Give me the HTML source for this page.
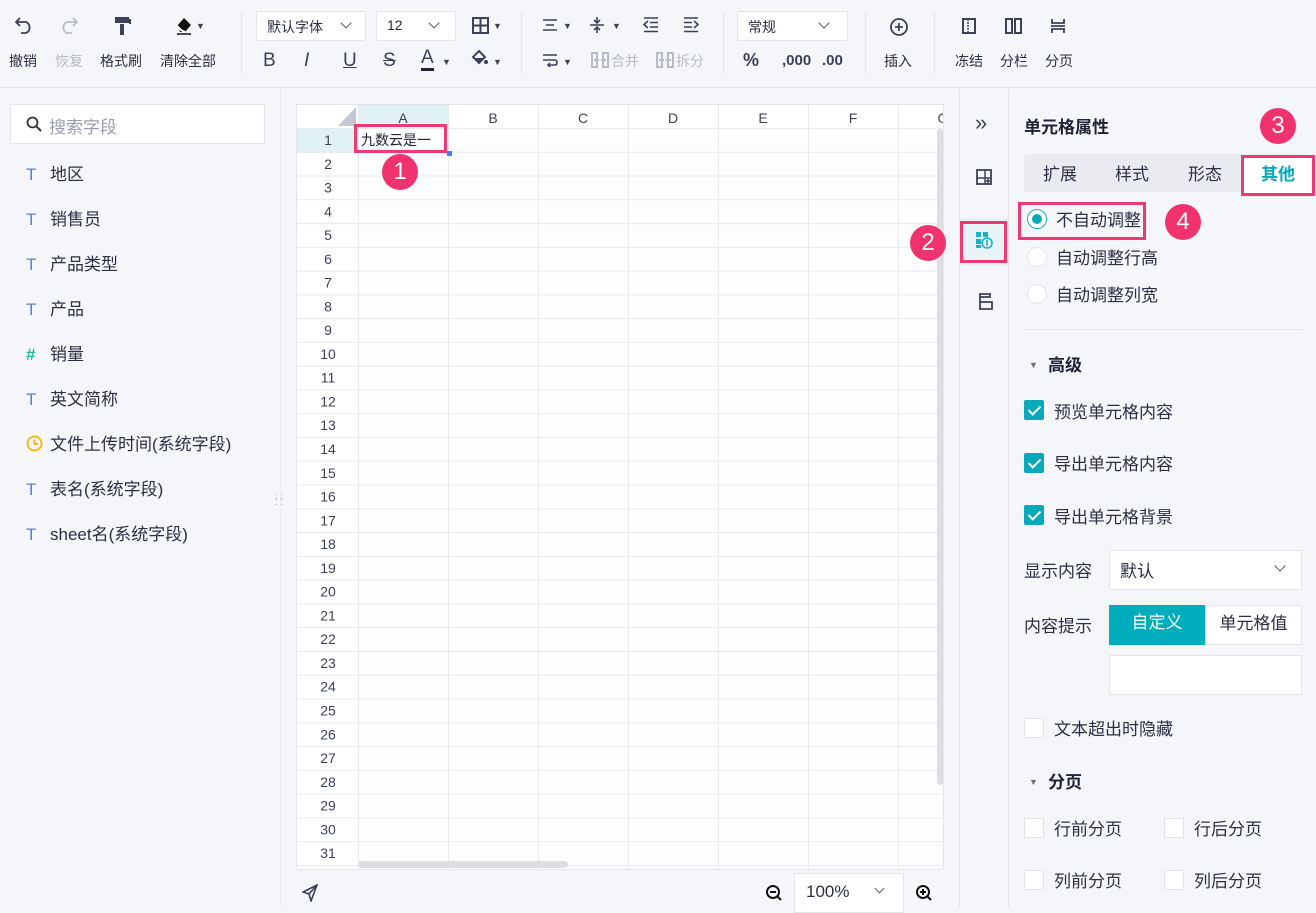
<!DOCTYPE html>
<html><head><meta charset="utf-8"><style>
*{box-sizing:border-box;margin:0;padding:0}
body{width:1316px;height:907px;overflow:hidden;background:#f5f6f9;font-family:"Liberation Sans","Noto Sans CJK SC",sans-serif;color:#2b2f44;position:relative;font-size:14px}
.a{position:absolute}
.tb{left:0;top:0;width:1316px;height:88px;background:#f5f6f9;border-bottom:1px solid #e3e5ea}
.lbl{font-size:14px;color:#2b2f44;white-space:nowrap}
.sep{width:1px;background:#e3e5ea;top:12px;height:62px}
.sel{background:#fff;border:1px solid #e3e5ea;border-radius:2px;height:30px;font-size:14px;padding:5px 10px}
.chev{width:8px;height:8px;border-right:1.5px solid #555a6e;border-bottom:1.5px solid #555a6e;transform:rotate(45deg)}
.ic{font-size:18px;color:#3c4158}
.tri{font-size:9px;color:#3c4158}
.grid{left:296px;top:104px;width:648px;height:766px;background:#fcfdff;border:1px solid #e3e5ea;overflow:hidden}
.fld{left:26px;font-size:17px;color:#2b2f44}
.fld b{display:inline-block;width:24px;color:#5a7fd8;font-weight:normal}
.badge{width:36px;height:36px;border-radius:50%;background:#f0336e;color:#fff;font-size:24px;text-align:center;line-height:36px}
.red{border:3px solid #ee3a72}
.cb{width:20px;height:20px;border-radius:2px;background:#fff;border:1px solid #dfe1e7}
.cb.on{background:#0aa9ba;border-color:#0aa9ba}
.cb.on:after{content:"";position:absolute;left:6px;top:2px;width:5px;height:10px;border-right:2px solid #fff;border-bottom:2px solid #fff;transform:rotate(45deg)}
.rd{width:20px;height:20px;border-radius:50%;background:#fff;border:1px solid #e3e5ea}
.t16{font-size:17px}
</style></head><body>
<div class="a tb"></div>
<svg class="a" style="left:15px;top:16px" width="20" height="18"><path d="M5 2L1 6L5 10M1 6H11A6 6 0 0 1 11 17H6" fill="none" stroke="#3c4158" stroke-width="1.8"/></svg>
<svg class="a" style="left:59px;top:16px" width="20" height="18"><path d="M14 2L18 6L14 10M18 6H8A6 6 0 0 0 8 17H13" fill="none" stroke="#b8bbc6" stroke-width="1.8"/></svg>
<svg class="a" style="left:114px;top:16px" width="18" height="20"><rect x="1" y="1" width="14" height="6" fill="#3c4158"/><rect x="15" y="3" width="2" height="5" fill="#3c4158"/><rect x="6" y="8" width="4" height="11" fill="#3c4158"/></svg>
<svg class="a" style="left:174px;top:15px" width="20" height="20"><path d="M3 11 L10 3 L17 10 L11 17 H6 Z" fill="#111"/><path d="M3 11 L7 15 L11 17" stroke="#fff" stroke-width="2" fill="none"/><line x1="3" y1="19" x2="17" y2="19" stroke="#111" stroke-width="1.5"/></svg>
<div class="a tri" style="left:196px;top:21px">▼</div>
<div class="a lbl" style="left:9px;top:51px">撤销</div>
<div class="a lbl" style="left:55px;top:51px;color:#b8bbc6">恢复</div>
<div class="a lbl" style="left:100px;top:51px">格式刷</div>
<div class="a lbl" style="left:160px;top:51px">清除全部</div>
<div class="a sep" style="left:241px"></div>
<div class="a sel" style="left:256px;top:11px;width:110px">默认字体</div><div class="a chev" style="left:342px;top:19px"></div>
<div class="a sel" style="left:376px;top:11px;width:80px">12</div><div class="a chev" style="left:430px;top:19px"></div>
<svg class="a" style="left:472px;top:17px" width="18" height="18"><rect x="1" y="1" width="15" height="15" fill="none" stroke="#3c4158" stroke-width="2"/><line x1="8.5" y1="1" x2="8.5" y2="16" stroke="#3c4158" stroke-width="2"/><line x1="1" y1="8.5" x2="16" y2="8.5" stroke="#3c4158" stroke-width="2"/></svg><div class="a tri" style="left:493px;top:21px">▼</div>
<div class="a" style="left:263px;top:50px;font-size:19px;color:#3c4158">B</div>
<div class="a" style="left:304px;top:50px;font-size:19px;color:#3c4158;font-style:italic">I</div>
<div class="a" style="left:343px;top:50px;font-size:19px;color:#3c4158;text-decoration:underline">U</div>
<div class="a" style="left:383px;top:50px;font-size:19px;color:#3c4158;text-decoration:line-through">S</div>
<div class="a" style="left:421px;top:48px;font-size:19px;color:#3c4158;border-bottom:3px solid #1e2236;line-height:20px">A</div><div class="a tri" style="left:442px;top:57px">▼</div>
<svg class="a" style="left:471px;top:50px" width="18" height="18"><path d="M8 1L14 7L8 13L2 7Z" fill="none" stroke="#3c4158" stroke-width="2"/><path d="M3 8H13L8 13Z" fill="#3c4158"/><circle cx="15" cy="12" r="2" fill="#3c4158"/></svg><div class="a tri" style="left:493px;top:57px">▼</div>
<div class="a sep" style="left:521px"></div>
<svg class="a" style="left:542px;top:18px" width="16" height="14"><path d="M1 2H15M4 7H12M1 12H15" stroke="#3c4158" stroke-width="1.6"/></svg><div class="a tri" style="left:563px;top:21px">▼</div>
<svg class="a" style="left:589px;top:16px" width="16" height="18"><path d="M1 9H15M8 1V7M8 11V17M5 4L8 7L11 4M5 14L8 11L11 14" stroke="#3c4158" stroke-width="1.6" fill="none"/></svg><div class="a tri" style="left:612px;top:21px">▼</div>
<svg class="a" style="left:643px;top:17px" width="16" height="16"><path d="M1 1H15M7 5.5H15M7 10H15M1 14.5H15M5 4L1 7.5L5 11" stroke="#3c4158" stroke-width="1.6" fill="none"/></svg>
<svg class="a" style="left:683px;top:17px" width="16" height="16"><path d="M1 1H15M1 5.5H9M1 10H9M1 14.5H15M11 4L15 7.5L11 11" stroke="#3c4158" stroke-width="1.6" fill="none"/></svg>
<svg class="a" style="left:542px;top:53px" width="16" height="14"><path d="M1 2H15M1 7H13Q15 7 15 9.5Q15 12 13 12H6M8 10L6 12L8 14" stroke="#3c4158" stroke-width="1.6" fill="none"/></svg><div class="a tri" style="left:563px;top:57px">▼</div>
<svg class="a" style="left:591px;top:52px" width="18" height="16"><path d="M1 1H6V15H1ZM17 1H12V15H17ZM3 8H8M15 8H10" fill="none" stroke="#b8bbc6" stroke-width="2"/></svg><div class="a lbl" style="left:611px;top:51px;color:#b8bbc6">合并</div>
<svg class="a" style="left:656px;top:52px" width="18" height="16"><path d="M1 1H6V15H1ZM17 1H12V15H17ZM3 8H8M15 8H10" fill="none" stroke="#b8bbc6" stroke-width="2"/></svg><div class="a lbl" style="left:676px;top:51px;color:#b8bbc6">拆分</div>
<div class="a sep" style="left:723px"></div>
<div class="a sel" style="left:737px;top:11px;width:111px">常规</div><div class="a chev" style="left:820px;top:19px"></div>
<div class="a" style="left:743px;top:50px;font-size:18px;color:#3c4158;font-weight:bold">%</div>
<div class="a" style="left:782px;top:52px;font-size:15px;color:#3c4158;font-weight:bold">,000</div>
<div class="a" style="left:822px;top:52px;font-size:15px;color:#3c4158;font-weight:bold">.00</div>
<div class="a sep" style="left:865px"></div>
<svg class="a" style="left:889px;top:17px" width="20" height="20"><circle cx="10" cy="10" r="8" fill="none" stroke="#3c4158" stroke-width="1.8"/><path d="M10 6V14M6 10H14" stroke="#3c4158" stroke-width="1.8"/></svg>
<div class="a lbl" style="left:884px;top:51px">插入</div>
<div class="a sep" style="left:934px"></div>
<svg class="a" style="left:962px;top:18px" width="16" height="16"><rect x="1" y="1" width="12" height="14" fill="none" stroke="#3c4158" stroke-width="2"/><line x1="6" y1="1" x2="6" y2="15" stroke="#3c4158" stroke-width="1.5" stroke-dasharray="2 1"/></svg>
<svg class="a" style="left:1005px;top:18px" width="18" height="16"><rect x="1" y="1" width="6" height="14" fill="none" stroke="#3c4158" stroke-width="2"/><rect x="10" y="1" width="6" height="14" fill="none" stroke="#3c4158" stroke-width="2"/></svg>
<svg class="a" style="left:1050px;top:18px" width="16" height="16"><path d="M2 1V5H14V1M1 8H15M2 15V11H14V15" stroke="#3c4158" stroke-width="1.8" fill="none"/></svg>
<div class="a lbl" style="left:955px;top:51px">冻结</div>
<div class="a lbl" style="left:1000px;top:51px">分栏</div>
<div class="a lbl" style="left:1045px;top:51px">分页</div>

<div class="a" style="left:280px;top:89px;width:1px;height:818px;background:#e8eaee"></div>
<div class="a" style="left:10px;top:104px;width:255px;height:40px;background:#fff;border:1px solid #e3e5ea;border-radius:2px"></div>
<svg class="a" style="left:26px;top:116px" width="16" height="16"><circle cx="6.5" cy="6.5" r="5" fill="none" stroke="#333" stroke-width="1.8"/><line x1="10" y1="10" x2="15" y2="15" stroke="#333" stroke-width="2"/></svg>
<div class="a" style="left:49px;top:113px;font-size:17px;color:#9a9eae">搜索字段</div>
<div class="a fld" style="top:160px"><b>T</b>地区</div>
<div class="a fld" style="top:205px"><b>T</b>销售员</div>
<div class="a fld" style="top:250px"><b>T</b>产品类型</div>
<div class="a fld" style="top:295px"><b>T</b>产品</div>
<div class="a fld" style="top:340px"><b style="color:#2bb5a5;font-weight:bold">#</b>销量</div>
<div class="a fld" style="top:385px"><b>T</b>英文简称</div>
<div class="a fld" style="top:430px"><b><svg width="17" height="17" style="vertical-align:-2px"><circle cx="8.5" cy="8.5" r="7" fill="none" stroke="#f5b91c" stroke-width="2"/><path d="M8.5 4.5V9H12" stroke="#f5b91c" stroke-width="2" fill="none"/></svg></b>文件上传时间(系统字段)</div>
<div class="a fld" style="top:475px"><b>T</b>表名(系统字段)</div>
<div class="a fld" style="top:520px"><b>T</b>sheet名(系统字段)</div>
<div class="a" style="left:275px;top:494px;font-size:10px;color:#9a9eae;line-height:6px">: :<br>: :</div>

<div class="a grid">
<svg width="648" height="766" style="position:absolute;left:0;top:0">
<rect x="0" y="0" width="648" height="24" fill="#fff"/>
<rect x="0" y="24" width="61" height="742" fill="#fff"/>
<rect x="61" y="0" width="90" height="24" fill="#e1f2f6"/>
<rect x="0" y="24" width="61" height="24" fill="#e1f2f6"/>
<path d="M59 2L59 21L41 21Z" fill="#c4c7d1"/>
<g stroke="#e8eaee" stroke-width="1">
<line x1="61.5" y1="0" x2="61.5" y2="766"/><line x1="151.5" y1="0" x2="151.5" y2="766"/><line x1="241.5" y1="0" x2="241.5" y2="766"/><line x1="331.5" y1="0" x2="331.5" y2="766"/><line x1="421.5" y1="0" x2="421.5" y2="766"/><line x1="511.5" y1="0" x2="511.5" y2="766"/><line x1="601.5" y1="0" x2="601.5" y2="766"/>
</g>
<g stroke="#e8eaee" id="rows"></g>
<g font-family="Liberation Sans" font-size="14" fill="#3c4158" text-anchor="middle">
<text x="106" y="18">A</text><text x="196" y="18">B</text><text x="286" y="18">C</text><text x="376" y="18">D</text><text x="466" y="18">E</text><text x="556" y="18">F</text><text x="646" y="18">G</text>
</g>
<g id="nums" font-family="Liberation Sans" font-size="14" fill="#3c4158" text-anchor="middle"></g>
<rect x="640" y="24" width="6" height="656" rx="3" fill="#dcdee3"/>
<rect x="61" y="756" width="210" height="7" rx="3.5" fill="#dcdee3"/>
</svg>
</div>
<div class="a red" style="left:354px;top:124px;width:93px;height:29px"></div>
<div class="a" style="left:361px;top:130px;font-size:14px;color:#1e2236">九数云是一</div>
<div class="a" style="left:447px;top:151px;width:5px;height:5px;background:#3b82f6"></div>
<div class="a badge" style="left:382px;top:154px">1</div>

<svg class="a" style="left:302px;top:884px" width="16" height="18"><path d="M15 1L1 8L7 10L9 17Z M7 10L15 1" fill="none" stroke="#3c4158" stroke-width="1.6"/></svg>
<svg class="a" style="left:765px;top:884px" width="18" height="18"><circle cx="8" cy="8" r="6" fill="none" stroke="#111" stroke-width="2"/><path d="M5 8H11M12 12L16 16" stroke="#111" stroke-width="2"/></svg>
<div class="a" style="left:794px;top:873px;width:110px;height:40px;background:#fff;border:1px solid #e3e5ea"></div>
<div class="a" style="left:806px;top:882px;font-size:17px;color:#2b2f44">100%</div>
<div class="a chev" style="left:876px;top:885px;width:7px;height:7px"></div>
<svg class="a" style="left:915px;top:884px" width="18" height="18"><circle cx="8" cy="8" r="6" fill="none" stroke="#111" stroke-width="2"/><path d="M5 8H11M8 5V11M12 12L16 16" stroke="#111" stroke-width="2"/></svg>

<div class="a" style="left:959px;top:89px;width:1px;height:818px;background:#e3e5ea"></div>
<div class="a" style="left:1008px;top:89px;width:1px;height:818px;background:#e3e5ea"></div>
<div class="a" style="left:975px;top:110px;font-size:22px;color:#3c4158">»</div>
<svg class="a" style="left:976px;top:169px" width="16" height="16"><rect x="1" y="1" width="14" height="14" fill="none" stroke="#3c4158" stroke-width="1.8"/><path d="M1 9H15M9 1V15M12 9V15M9 12H15" stroke="#3c4158" stroke-width="1.5"/></svg>
<div class="a" style="left:960px;top:218px;width:48px;height:48px;background:#e9f3f6"></div>
<div class="a red" style="left:960px;top:221px;width:47px;height:42px"></div>
<svg class="a" style="left:975px;top:231px" width="18" height="18"><rect x="1" y="1" width="5" height="5" fill="#19b2c4"/><rect x="8" y="1" width="5" height="5" fill="#19b2c4"/><rect x="1" y="8" width="5" height="5" fill="#19b2c4"/><rect x="1" y="14" width="5" height="3" fill="#19b2c4"/><circle cx="12" cy="12" r="5" fill="none" stroke="#19b2c4" stroke-width="1.6"/><line x1="12" y1="9" x2="12" y2="15" stroke="#19b2c4" stroke-width="1.6"/></svg>
<div class="a badge" style="left:910px;top:225px">2</div>
<svg class="a" style="left:976px;top:293px" width="18" height="18"><path d="M4 4H14V1H4ZM4 4V16H16V9H4" fill="none" stroke="#3c4158" stroke-width="1.8"/></svg>

<div class="a" style="left:1024px;top:113px;font-size:17px;font-weight:bold;color:#1e2236">单元格属性</div>
<div class="a badge" style="left:1260px;top:108px">3</div>
<div class="a" style="left:1024px;top:154px;width:275px;height:38px;background:#eaebf0;border-radius:2px"></div>
<div class="a t16" style="left:1043px;top:160px">扩展</div>
<div class="a t16" style="left:1115px;top:160px">样式</div>
<div class="a t16" style="left:1188px;top:160px">形态</div>
<div class="a" style="left:1241px;top:155px;width:74px;height:41px;background:#fff"></div>
<div class="a red" style="left:1241px;top:155px;width:74px;height:41px"></div>
<div class="a t16" style="left:1261px;top:160px;color:#0aa9ba;font-weight:bold">其他</div>
<div class="a red" style="left:1018px;top:202px;width:128px;height:38px"></div>
<div class="a rd" style="left:1027px;top:209px;border-color:#19b2c4"></div>
<div class="a" style="left:1032px;top:214px;width:10px;height:10px;border-radius:50%;background:#0aa9ba"></div>
<div class="a t16" style="left:1056px;top:206px">不自动调整</div>
<div class="a badge" style="left:1165px;top:204px">4</div>
<div class="a rd" style="left:1027px;top:247px"></div>
<div class="a t16" style="left:1056px;top:244px">自动调整行高</div>
<div class="a rd" style="left:1027px;top:284px"></div>
<div class="a t16" style="left:1056px;top:281px">自动调整列宽</div>
<div class="a" style="left:1024px;top:329px;width:278px;height:1px;background:#e3e5ea"></div>
<div class="a" style="left:1029px;top:360px;font-size:9px;color:#6b6f80">▼</div>
<div class="a t16" style="left:1048px;top:351px;font-weight:bold;color:#1e2236">高级</div>
<div class="a cb on" style="left:1024px;top:400px"></div><div class="a t16" style="left:1054px;top:398px">预览单元格内容</div>
<div class="a cb on" style="left:1024px;top:453px"></div><div class="a t16" style="left:1054px;top:450px">导出单元格内容</div>
<div class="a cb on" style="left:1024px;top:505px"></div><div class="a t16" style="left:1054px;top:503px">导出单元格背景</div>
<div class="a t16" style="left:1024px;top:557px">显示内容</div>
<div class="a" style="left:1109px;top:550px;width:193px;height:40px;background:#fff;border:1px solid #e3e5ea"></div>
<div class="a t16" style="left:1120px;top:557px">默认</div>
<div class="a chev" style="left:1276px;top:562px"></div>
<div class="a t16" style="left:1024px;top:612px">内容提示</div>
<div class="a" style="left:1109px;top:605px;width:96px;height:40px;background:#00adbd;color:#fff;font-size:17px;text-align:center;line-height:36px">自定义</div>
<div class="a" style="left:1205px;top:605px;width:97px;height:40px;background:#fff;border:1px solid #e3e5ea;font-size:17px;text-align:center;line-height:36px">单元格值</div>
<div class="a" style="left:1109px;top:655px;width:193px;height:40px;background:#fff;border:1px solid #e3e5ea"></div>
<div class="a cb" style="left:1024px;top:718px"></div><div class="a t16" style="left:1054px;top:715px">文本超出时隐藏</div>
<div class="a" style="left:1029px;top:777px;font-size:9px;color:#6b6f80">▼</div>
<div class="a t16" style="left:1048px;top:768px;font-weight:bold;color:#1e2236">分页</div>
<div class="a cb" style="left:1024px;top:818px"></div><div class="a t16" style="left:1054px;top:815px">行前分页</div>
<div class="a cb" style="left:1164px;top:818px"></div><div class="a t16" style="left:1194px;top:815px">行后分页</div>
<div class="a cb" style="left:1024px;top:870px"></div><div class="a t16" style="left:1054px;top:867px">列前分页</div>
<div class="a cb" style="left:1164px;top:870px"></div><div class="a t16" style="left:1194px;top:867px">列后分页</div>

<script>
var r=document.getElementById('rows'),n=document.getElementById('nums'),s='',t='';
for(var i=0;i<=31;i++){var y=23+i*23.77;s+='<line x1="0" y1="'+(y+0.5)+'" x2="648" y2="'+(y+0.5)+'"/>';if(i<31)t+='<text x="31" y="'+(y+17)+'">'+(i+1)+'</text>';}
r.innerHTML=s;n.innerHTML=t;
</script>
</body></html>
